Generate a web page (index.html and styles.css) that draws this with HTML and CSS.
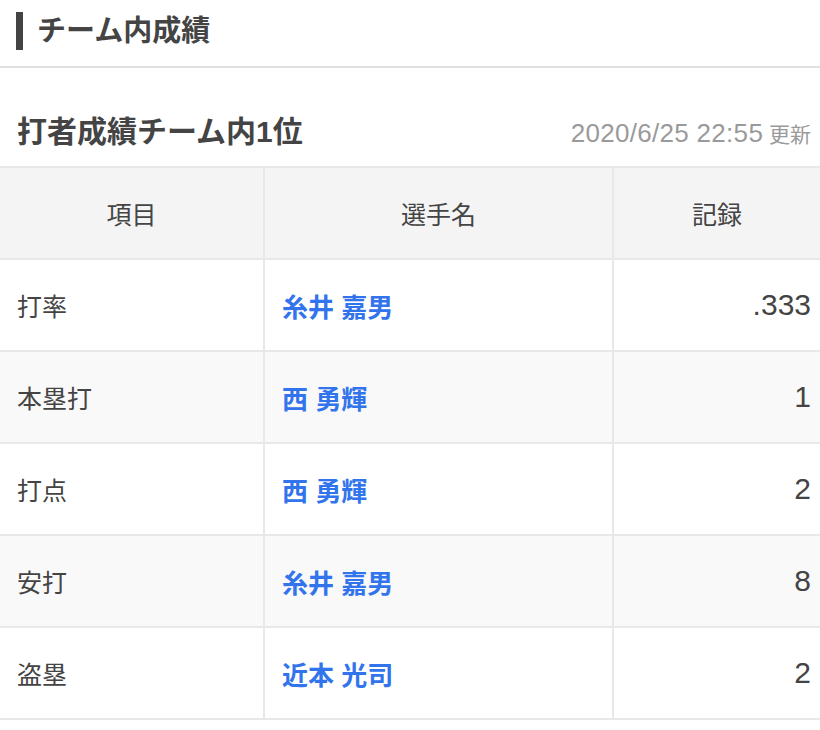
FILE: index.html
```html
<!DOCTYPE html>
<html lang="ja">
<head>
<meta charset="utf-8">
<link rel="stylesheet" href="styles.css">
</head>
<body>
<header class="page-head">
  <h1 class="page-title">チーム内成績</h1>
</header>
<section class="stats">
  <div class="stats-head">
    <h2 class="stats-title">打者成績チーム内1位</h2>
    <span class="stats-date"><span class="date-num">2020/6/25 22:55</span> 更新</span>
  </div>
  <table class="stats-table">
    <thead>
      <tr><th class="c-item">項目</th><th class="c-name">選手名</th><th class="c-rec">記録</th></tr>
    </thead>
    <tbody>
      <tr><td class="c-item">打率</td><td class="c-name"><a>糸井 嘉男</a></td><td class="c-rec">.333</td></tr>
      <tr><td class="c-item">本塁打</td><td class="c-name"><a>西 勇輝</a></td><td class="c-rec">1</td></tr>
      <tr><td class="c-item">打点</td><td class="c-name"><a>西 勇輝</a></td><td class="c-rec">2</td></tr>
      <tr><td class="c-item">安打</td><td class="c-name"><a>糸井 嘉男</a></td><td class="c-rec">8</td></tr>
      <tr><td class="c-item">盗塁</td><td class="c-name"><a>近本 光司</a></td><td class="c-rec">2</td></tr>
    </tbody>
  </table>
</section>
</body>
</html>
```
FILE: styles.css
```css
html, body {
  margin: 0;
  padding: 0;
  background: #fff;
}
body {
  width: 820px;
  font-family: "Liberation Sans", "Noto Sans CJK JP", sans-serif;
  color: #333;
}
.page-head {
  padding: 12px 16px 16px;
  border-bottom: 2px solid #e0e0e0;
}
.page-title {
  margin: 0;
  height: 38px;
  border-left: 7px solid #444;
  padding-left: 14px;
  font-size: 29px;
  line-height: 38px;
  font-weight: 700;
  color: #444;
}
.stats-head {
  display: flex;
  justify-content: space-between;
  align-items: baseline;
  padding: 44px 9px 14px 17px;
}
.stats-title {
  margin: 0;
  font-size: 30px;
  line-height: 40px;
  font-weight: 700;
  color: #444;
}
.stats-date {
  font-size: 21px;
  color: #9a9a9a;
}
.date-num {
  font-size: 26px;
  letter-spacing: 0.3px;
}
.stats-table {
  width: 820px;
  border-collapse: collapse;
  table-layout: fixed;
  font-size: 25px;
}
.stats-table th,
.stats-table td {
  height: 90px;
  padding: 0;
  border-top: 2px solid #e8e8e8;
  border-bottom: 2px solid #e8e8e8;
  color: #444;
}
.stats-table th {
  background: #f4f4f4;
  font-weight: 400;
  text-align: center;
}
.stats-table .c-item { width: 263px; border-right: 2px solid #e8e8e8; }
.stats-table .c-name { width: 347px; border-right: 2px solid #e8e8e8; }
.stats-table td.c-item { padding-left: 17px; }
.stats-table td.c-name { padding-left: 17px; }
.stats-table td.c-rec { text-align: right; padding-right: 9px; font-size: 30px; }
.stats-table th.c-rec { text-align: center; }
.stats-table tbody tr:nth-child(even) td { background: #f9f9f9; }
.stats-table a {
  color: #3174ec;
  font-weight: 700;
  font-size: 26px;
}
```
